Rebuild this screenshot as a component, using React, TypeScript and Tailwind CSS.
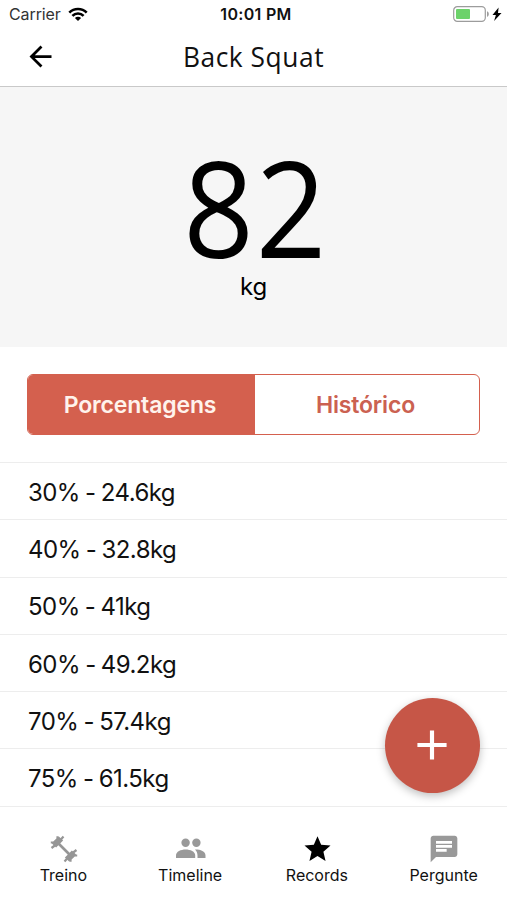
import React from "react";
import { MdArrowBack, MdChat, MdAdd } from "react-icons/md";
import { IoMdStar } from "react-icons/io";

const records = [
  "30% - 24.6kg",
  "40% - 32.8kg",
  "50% - 41kg",
  "60% - 49.2kg",
  "70% - 57.4kg",
  "75% - 61.5kg",
];

const WifiIcon = () => (
  <svg className="ml-[7px] h-[15px] w-[20px]" viewBox="0 0 20 15" fill="none" stroke="#000" strokeWidth="2.6">
    <path d="M1.3 5.6a12.3 12.3 0 0 1 17.4 0" />
    <path d="M4.4 8.8a7.9 7.9 0 0 1 11.2 0" />
    <path d="M10 14 6.9 11a4.4 4.4 0 0 1 6.2 0z" fill="#000" stroke="none" />
  </svg>
);

const BatteryIcon = () => (
  <svg className="h-[16px] w-[50px]" viewBox="0 0 50 16" fill="none">
    <rect x=".7" y=".7" width="31.6" height="14.6" rx="3.6" stroke="#9c9c9c" strokeWidth="1.2" />
    <rect x="3" y="3" width="14" height="10" rx="1" fill="#6cd26a" />
    <path d="M34 5.2c2.4.8 2.4 4.8 0 5.6z" fill="#9c9c9c" />
    <path d="M45.6 1.5 39.5 9h3.4l-1.8 6L48.5 7H45z" fill="#000" />
  </svg>
);

const DumbbellIcon = () => (
  <svg className="ml-[2px] h-[28px] w-[28px]" viewBox="0 0 28 28" fill="none" stroke="#969696">
    <path d="M7 7l14 14" strokeWidth="2.6" />
    <path d="M4 10.5 11 3.5M17 24.5 24 17.5" strokeWidth="6" />
    <path
      d="M.8 7.5h3L7.5 4V1.2M1.5 13l4-3M13.5 1.5 10 5.5M27.2 20.5h-3L20.5 24v2.8M26.5 15l-4 3M14.5 26.5l3.5-4"
      strokeWidth="2.2"
    />
  </svg>
);

const PeopleIcon = () => (
  <svg className="h-[21px] w-[31px]" viewBox="0 0 31 21" fill="currentColor">
    <circle cx="10.6" cy="4.8" r="4.2" />
    <circle cx="21.4" cy="4.8" r="4.2" />
    <path d="M1 20v-2.5c0-4 4.8-6 9.6-6s9.6 2 9.6 6V20z" />
    <path d="M20 11.5c5.3-.1 10.5 1.7 10.5 6V20h-8v-2.5c0-2.6-1-4.5-2.5-6z" />
  </svg>
);

const tabs = [
  { label: "Treino", icon: <DumbbellIcon /> },
  { label: "Timeline", icon: <PeopleIcon /> },
  { label: "Records", icon: <IoMdStar className="ml-[2px] h-[33px] w-[33px] text-black" /> },
  { label: "Pergunte", icon: <MdChat className="h-[32px] w-[32px]" /> },
];

const App = () => {
  return (
    <div className="relative flex h-[900px] w-[507px] flex-col overflow-hidden bg-white font-['Inter',sans-serif] text-[#111]">
      {/* Status bar */}
      <div className="grid h-[28px] shrink-0 grid-cols-3 items-center pl-[9px] pr-[4px] text-[16px]">
        <div className="flex items-center text-[#333]">
          <span className="tracking-[-0.1px]">Carrier</span>
          <WifiIcon />
        </div>
        <div className="text-center font-semibold tracking-[0.3px] text-[#111]">10:01 PM</div>
        <div className="flex justify-end">
          <BatteryIcon />
        </div>
      </div>
      {/* Header */}
      <div className="grid h-[59px] shrink-0 grid-cols-[56px_1fr_56px] items-center border-b border-[#c9c9c9]">
        <MdArrowBack className="mb-[2px] ml-[24px] h-[33px] w-[33px] text-black" />
        <h1 className="scale-x-[0.94] pb-[3px] text-center font-['Open_Sans',sans-serif] text-[28px] tracking-[0.6px]">
          Back Squat
        </h1>
      </div>
      {/* Current record */}
      <div className="flex h-[260px] shrink-0 flex-col items-center bg-[#f6f6f6] pt-[53px] text-black">
        <div className="h-[133px] scale-x-[0.93] pl-[6px] font-['Open_Sans',sans-serif] text-[133px] font-[385] leading-[133px] tracking-[2px]">
          82
        </div>
        <div className="text-[24px] leading-[28px] tracking-[-0.3px]">kg</div>
      </div>
      <div className="mx-[27px] mt-[27px] flex h-[61px] shrink-0 overflow-hidden rounded-[6px] border border-[#d4604e] text-[23px] font-semibold tracking-[-0.15px]">
        <button className="w-[227px] bg-[#d4604e] pr-[3px] pt-[2px] text-[#fff3ec]">Porcentagens</button>
        <button className="flex-1 pr-[3px] pt-[2px] text-[#cb6151]">Histórico</button>
      </div>
      <ul className="mt-[27px] border-t border-[#ededed]">
        {records.map((record) => (
          <li
            key={record}
            className="flex h-[57.3px] items-center border-b border-[#ededed] pl-[28px] pt-[3px] text-[24px] tracking-[-0.55px] [word-spacing:-1px]"
          >
            {record}
          </li>
        ))}
      </ul>
      {/* Tab bar */}
      <div className="grid flex-1 grid-cols-4 bg-white">
        {tabs.map((tab) => (
          <div key={tab.label} className="flex flex-col items-center pt-[26px] text-[16px] leading-[20px]">
            <div className="flex h-[32px] items-center text-[#999]">{tab.icon}</div>
            <span>{tab.label}</span>
          </div>
        ))}
      </div>
      <button className="absolute left-[385px] top-[698px] flex h-[95px] w-[95px] items-center justify-center rounded-full bg-[#c65647] pb-[2px] pr-[2px] text-white shadow-[0_3px_8px_rgba(0,0,0,0.25)]">
        <MdAdd className="h-[50px] w-[50px]" />
      </button>
    </div>
  );
};

export default App;
